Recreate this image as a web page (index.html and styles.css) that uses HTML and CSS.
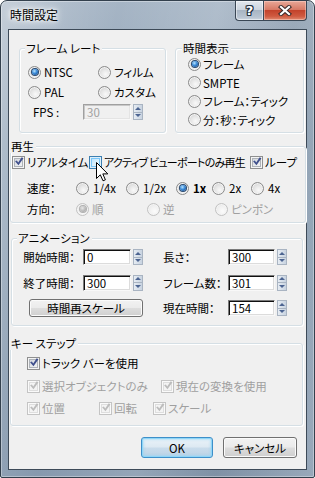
FILE: index.html
```html
<!DOCTYPE html>
<html lang="ja">
<head>
<meta charset="utf-8">
<title>時間設定</title>
<link rel="stylesheet" href="styles.css">
</head>
<body>
<svg class="defs" width="0" height="0" aria-hidden="true">
  <defs>
    <symbol id="chk" viewBox="0 0 11 11">
      <path d="M1.2 5.3 L3.2 4.5 L4.6 6.7 L8.5 0.8 L10.4 1.8 L4.9 9.7 Z"/>
    </symbol>
  </defs>
</svg>
<div class="window">
  <div class="titlebar">
    <span class="title">時間設定</span>
    <div class="capbtns">
      <span class="cap help">?</span>
      <span class="cap close">
        <svg width="14" height="11" viewBox="0 0 14 11"><path d="M3 2 L11 9 M11 2 L3 9" stroke="#3a2a2a" stroke-width="4.2" stroke-linecap="square"/><path d="M3 2 L11 9 M11 2 L3 9" stroke="#fff" stroke-width="2.2" stroke-linecap="square"/></svg>
      </span>
    </div>
  </div>
  <div class="client">
    <div class="top-row">
      <fieldset class="grp rate">
        <legend>フレーム レート</legend>
        <div class="rate-grid">
          <label class="opt"><span class="radio on"></span>NTSC</label>
          <label class="opt"><span class="radio"></span>フィルム</label>
          <label class="opt"><span class="radio"></span>PAL</label>
          <label class="opt"><span class="radio"></span>カスタム</label>
        </div>
        <div class="fps-row">
          <span class="fps-label">FPS :</span>
          <span class="field off">30</span>
          <span class="spin"><span class="up"></span><span class="dn"></span></span>
        </div>
      </fieldset>
      <fieldset class="grp disp">
        <legend>時間表示</legend>
        <div class="disp-list">
          <label class="opt"><span class="radio on"></span>フレーム</label>
          <label class="opt"><span class="radio"></span>SMPTE</label>
          <label class="opt"><span class="radio"></span>フレーム：ティック</label>
          <label class="opt"><span class="radio"></span>分：秒：ティック</label>
        </div>
      </fieldset>
    </div>

    <fieldset class="grp play">
      <legend>再生</legend>
      <div class="play-checks">
        <label class="opt w77"><span class="cb"><svg><use href="#chk"/></svg></span>リアルタイム</label>
        <label class="opt w161"><span class="cb hover"></span><span class="tight">アクティブ ビューポートのみ再生</span></label>
        <label class="opt"><span class="cb"><svg><use href="#chk"/></svg></span>ループ</label>
      </div>
      <div class="play-row speed">
        <span class="row-label">速度：</span>
        <label class="opt num w50"><span class="radio"></span>1/4x</label>
        <label class="opt num w50"><span class="radio"></span>1/2x</label>
        <label class="opt num w36 bold"><span class="radio on"></span>1x</label>
        <label class="opt num w39"><span class="radio"></span>2x</label>
        <label class="opt num"><span class="radio"></span>4x</label>
      </div>
      <div class="play-row dir">
        <span class="row-label">方向：</span>
        <label class="opt dis w71"><span class="radio on"></span>順</label>
        <label class="opt dis w68"><span class="radio"></span>逆</label>
        <label class="opt dis"><span class="radio"></span>ピンポン</label>
      </div>
    </fieldset>

    <fieldset class="grp anim">
      <legend>アニメーション</legend>
      <div class="anim-grid">
        <span class="a-label">開始時間：</span>
        <span class="field w48">0</span>
        <span class="spin"><span class="up"></span><span class="dn"></span></span>
        <span class="b-label">長さ：</span>
        <span class="field w47">300</span>
        <span class="spin"><span class="up"></span><span class="dn"></span></span>

        <span class="a-label">終了時間：</span>
        <span class="field w48">300</span>
        <span class="spin"><span class="up"></span><span class="dn"></span></span>
        <span class="b-label">フレーム数：</span>
        <span class="field w47">301</span>
        <span class="spin"><span class="up"></span><span class="dn"></span></span>

        <span class="btn rescale">時間再スケール</span>
        <span class="b-label">現在時間：</span>
        <span class="field w47">154</span>
        <span class="spin"><span class="up"></span><span class="dn"></span></span>
      </div>
    </fieldset>

    <fieldset class="grp key">
      <legend>キー ステップ</legend>
      <div class="key-row">
        <label class="opt"><span class="cb"><svg><use href="#chk"/></svg></span>トラック バーを使用</label>
      </div>
      <div class="key-row r2">
        <label class="opt dis w134"><span class="cb"><svg><use href="#chk"/></svg></span>選択オブジェクトのみ</label>
        <label class="opt dis"><span class="cb"><svg><use href="#chk"/></svg></span>現在の変換を使用</label>
      </div>
      <div class="key-row r3">
        <label class="opt dis w72"><span class="cb"><svg><use href="#chk"/></svg></span>位置</label>
        <label class="opt dis w54"><span class="cb"><svg><use href="#chk"/></svg></span>回転</label>
        <label class="opt dis"><span class="cb"><svg><use href="#chk"/></svg></span>スケール</label>
      </div>
    </fieldset>

    <div class="dlg-buttons">
      <span class="btn default ok">OK</span>
      <span class="btn cancel">キャンセル</span>
    </div>
  </div>
</div>
<svg class="cursor" width="13" height="20" viewBox="0 0 13 20"><path d="M0.5 0.5 L0.5 16.5 L4.3 12.8 L7 18.8 L9.4 17.8 L6.8 11.9 L11.8 11.9 Z" fill="#fff" stroke="#000" stroke-width="1" stroke-linejoin="miter"/></svg>
</body>
</html>
```

FILE: styles.css
```css
* { box-sizing: border-box; }
html, body { margin: 0; padding: 0; }
body {
  width: 315px;
  height: 478px;
  overflow: hidden;
  position: relative;
  background: #ffffff;
  font-family: "Noto Sans CJK JP", "Noto Sans", sans-serif;
  font-size: 11.5px;
  line-height: 14px;
  color: #000;
  font-feature-settings: "palt";
}
.defs { position: absolute; width: 0; height: 0; }

.window {
  width: 315px;
  height: 478px;
  border: 1px solid #33404d;
  border-radius: 7px 7px 2px 2px;
  padding: 0 7px;
  background:
    linear-gradient(100deg, rgba(255,255,255,0.35) 0%, rgba(255,255,255,0.1) 18%, rgba(0,0,0,0) 30%, rgba(255,255,255,0.12) 55%, rgba(0,0,0,0.05) 75%, rgba(255,255,255,0.15) 100%),
    linear-gradient(#a6b5c5, #93a6b9 30%, #8699ae 100%);
  box-shadow: inset 0 0 0 1px rgba(255,255,255,0.35);
  display: flex;
  flex-direction: column;
}

.titlebar {
  height: 28px;
  display: flex;
  align-items: flex-start;
  flex: none;
}
.title {
  flex: 1;
  margin: 7px 0 0 2px;
  font-size: 12px;
  line-height: 14px;
  color: #000;
  text-shadow: 0 0 6px #fff, 0 0 10px rgba(255,255,255,0.9), 0 0 3px #fff;
}
.capbtns { display: flex; }
.cap {
  height: 20px;
  border: 1px solid #3a4755;
  border-top: none;
  display: flex;
  align-items: center;
  justify-content: center;
}
.help {
  width: 28px;
  border-right: none;
  border-radius: 0 0 0 4px;
  background: linear-gradient(#e1e7ee 0%, #ccd5df 45%, #a8b5c3 50%, #b8c4d1 85%, #cdd6e0 100%);
  box-shadow: inset 0 0 0 1px rgba(255,255,255,0.5);
  font-family: "DejaVu Sans", sans-serif;
  font-weight: bold;
  font-size: 13px;
  line-height: 14px;
  color: #fff;
  text-shadow: 1px 0 0 #243040, -1px 0 0 #243040, 0 1px 0 #243040, 0 -1px 0 #243040, 1px 1px 0 #243040, -1px -1px 0 #243040, 1px -1px 0 #243040, -1px 1px 0 #243040;
}
.close {
  width: 44px;
  border-radius: 0 0 4px 0;
  background: linear-gradient(#e8a898 0%, #d77a66 45%, #c3432b 50%, #cf5a40 80%, #e08a70 100%);
  box-shadow: inset 0 0 0 1px rgba(255,220,210,0.45);
}

.client {
  height: 441px;
  flex: none;
  border: 1px solid #3d4a58;
  background: #f0f0f0;
  padding: 0 0 0 1px;
  display: flex;
  flex-direction: column;
  align-items: flex-start;
}

/* group boxes */
.grp {
  margin: 0;
  padding: 0;
  min-width: 0;
  border: 1px solid #d5dfe5;
  border-radius: 3px;
  box-shadow: inset 1px 1px 0 #fff, 1px 1px 0 #fff;
}
.grp legend {
  padding: 0 2px 0 1px;
  height: 14px;
  line-height: 14px;
  background: #f0f0f0;
}

.top-row {
  display: flex;
  gap: 9px;
  margin: 11px 0 0 9px;
}
.rate { width: 147px; padding-bottom: 10px; }
.rate legend { margin-left: 5px; }
.disp { width: 129px; padding-bottom: 3px; }
.disp legend { margin-left: 6px; }

.opt {
  display: flex;
  align-items: center;
  gap: 3px;
  white-space: nowrap;
  flex: none;
}
.rate-grid {
  display: grid;
  grid-template-columns: 70px auto;
  grid-auto-rows: 20px;
  margin: 7px 0 0 8px;
}
.fps-row {
  display: flex;
  align-items: center;
  height: 20px;
  margin-left: 13px;
}
.fps-label { width: 50px; }

.disp-list {
  display: grid;
  grid-auto-rows: 18.5px;
  margin-left: 12px;
}
.disp-list .opt { gap: 2px; }

/* controls */
.radio {
  width: 13px;
  height: 13px;
  flex: none;
  border-radius: 50%;
  border: 1px solid #8a8a8a;
  background: radial-gradient(circle at 60% 65%, #f9f9f9 0%, #e6e6e6 45%, #c9c9c9 100%);
  box-shadow: inset 0 0 0 1px #f4f4f4;
  display: flex;
  align-items: center;
  justify-content: center;
}
.radio.on::after {
  content: "";
  width: 6px;
  height: 6px;
  border-radius: 50%;
  background: radial-gradient(circle at 40% 35%, #b8e4ff 0%, #3a8ad8 45%, #0d3a7a 100%);
  box-shadow: 0 0 0 1px #2a4a70;
}
.dis .radio {
  border-color: #c2c2c2;
  background: radial-gradient(circle at 60% 65%, #fbfbfb 0%, #f0f0f0 50%, #e0e0e0 100%);
}
.dis .radio.on::after {
  background: radial-gradient(circle at 40% 35%, #e8e8e8 0%, #b5b5b5 60%, #9a9a9a 100%);
  box-shadow: 0 0 0 1px #b0b0b0;
}
.dis { color: #a0a0a0; }

.cb {
  width: 13px;
  height: 13px;
  flex: none;
  border: 1px solid #8e8f8f;
  background: linear-gradient(135deg, #c9ced4 0%, #e4e7ea 50%, #f8f8f8 100%);
  box-shadow: inset 0 0 0 1px #f4f4f4, inset 0 0 0 2px #aeb3b9;
  display: flex;
  align-items: center;
  justify-content: center;
}
.cb svg { width: 11px; height: 11px; fill: #3f4f8c; margin-top: -1px; margin-left: 1px; }
.cb.hover {
  border-color: #3c7fb1;
  background: linear-gradient(135deg, #b1dffd 0%, #d6effd 50%, #ebf8fe 100%);
  box-shadow: inset 0 0 0 1px #deeffa, inset 0 0 0 2px #79c6f9;
}
.dis .cb {
  border-color: #c4c4c4;
  background: #f4f4f4;
  box-shadow: inset 0 0 0 1px #fafafa, inset 0 0 0 2px #dedede;
}
.dis .cb svg { fill: #bcbcbc; }

.field {
  height: 16px;
  padding: 0 3px;
  display: flex;
  align-items: center;
  background: #fff;
  border-top: 1px solid #7a7a7a;
  border-left: 1px solid #7a7a7a;
  border-right: 1px solid #f8f8f8;
  border-bottom: 1px solid #f8f8f8;
  box-shadow: inset 1px 1px 0 #101010, inset -1px -1px 0 #dcdcdc;
  line-height: 14px;
}
.fps-row .field { width: 48px; }
.field.off {
  color: #a0a0a0;
  background: #f0f0f0;
  border-top-color: #a0a0a0;
  border-left-color: #a0a0a0;
  box-shadow: inset 1px 1px 0 #c8c8c8, inset -1px -1px 0 #e4e4e4;
}
.w48 { width: 48px; }
.w47 { width: 47px; }

.spin {
  width: 10px;
  height: 16px;
  margin-left: 2px;
  flex: none;
  display: flex;
  flex-direction: column;
  border: 1px solid #a9b4c2;
  background: linear-gradient(90deg, #e6ecf3, #c8d3e0);
}
.spin .up, .spin .dn {
  flex: 1;
  display: flex;
  align-items: center;
  justify-content: center;
}
.spin .up { border-bottom: 1px solid #a9b4c2; }
.spin .up::after {
  content: "";
  border-left: 3px solid transparent;
  border-right: 3px solid transparent;
  border-bottom: 3px solid #4c6491;
}
.spin .dn::after {
  content: "";
  border-left: 3px solid transparent;
  border-right: 3px solid transparent;
  border-top: 3px solid #4c6491;
}

/* playback */
.play { width: 296px; margin-top: 6px; padding-bottom: 3px; }
.play legend { margin-left: -1px; }
.play-checks {
  display: flex;
  align-items: center;
  height: 18px;
  margin-left: 1px;
}
.play-checks .opt { gap: 2px; }
.tight { font-size: 11px; letter-spacing: -0.75px; }
.w77 { width: 77px; }
.w161 { width: 161px; }
.play-row {
  display: flex;
  align-items: center;
  height: 20px;
  margin-left: 16px;
}
.play-row.speed { margin-top: 7px; }
.play-row.dir { margin-top: 1px; }
.row-label { width: 49px; flex: none; }
.num { gap: 4px; }
.w50 { width: 50px; }
.w36 { width: 36px; }
.w39 { width: 39px; }
.w71 { width: 71px; }
.w68 { width: 68px; }
.bold { font-weight: bold; }

/* animation */
.anim { width: 292px; margin: 8px 0 0 1px; padding: 2px 0 7px 0; }
.anim legend { margin-left: 5px; }
.anim-grid {
  display: grid;
  grid-template-columns: 68px 50px 30px 65px 49px 10px;
  grid-template-rows: 20px 20px 20px;
  row-gap: 5.5px;
  margin-left: 3px;
  align-items: center;
}
.anim-grid .spin { margin-left: 0; }
.a-label { text-align: right; padding-right: 8px; white-space: nowrap; }
.b-label { white-space: nowrap; }
.rescale {
  grid-column: 1 / 4;
  margin-left: 14px;
  width: 114px;
  height: 18px;
}

/* key steps */
.key { width: 293px; margin-top: 10px; padding: 3px 0 7px 0; }
.key legend { margin-left: -1px; }
.key-row {
  display: flex;
  align-items: center;
  height: 20px;
  margin-left: 16px;
}
.key-row .opt { gap: 2px; }
.key-row.r2 { margin-top: 3px; }
.key-row.r3 { margin-top: 2px; }
.w134 { width: 134px; }
.w72 { width: 72px; }
.w54 { width: 54px; }

/* buttons */
.btn {
  display: flex;
  align-items: center;
  justify-content: center;
  border: 1px solid #707070;
  border-radius: 3px;
  background: linear-gradient(#f2f2f2 0%, #ebebeb 48%, #dddddd 52%, #cfcfcf 100%);
  box-shadow: inset 0 0 0 1px #fbfbfb;
  white-space: nowrap;
}
.dlg-buttons {
  display: flex;
  gap: 10px;
  align-self: stretch;
  justify-content: flex-end;
  padding-right: 9px;
  margin-top: 11px;
}
.ok { width: 72px; height: 21px; }
.cancel { width: 74px; height: 21px; }
.btn.default {
  border-color: #3d8fc9;
  background: linear-gradient(#eaf3f9 0%, #dde9f2 48%, #c9dceb 52%, #bcd3e6 100%);
  box-shadow: inset 0 0 0 1px #8fd6f7, inset 0 0 2px 2px rgba(143,214,247,0.5);
}

.cursor {
  position: absolute;
  left: 96px;
  top: 162px;
}
```
